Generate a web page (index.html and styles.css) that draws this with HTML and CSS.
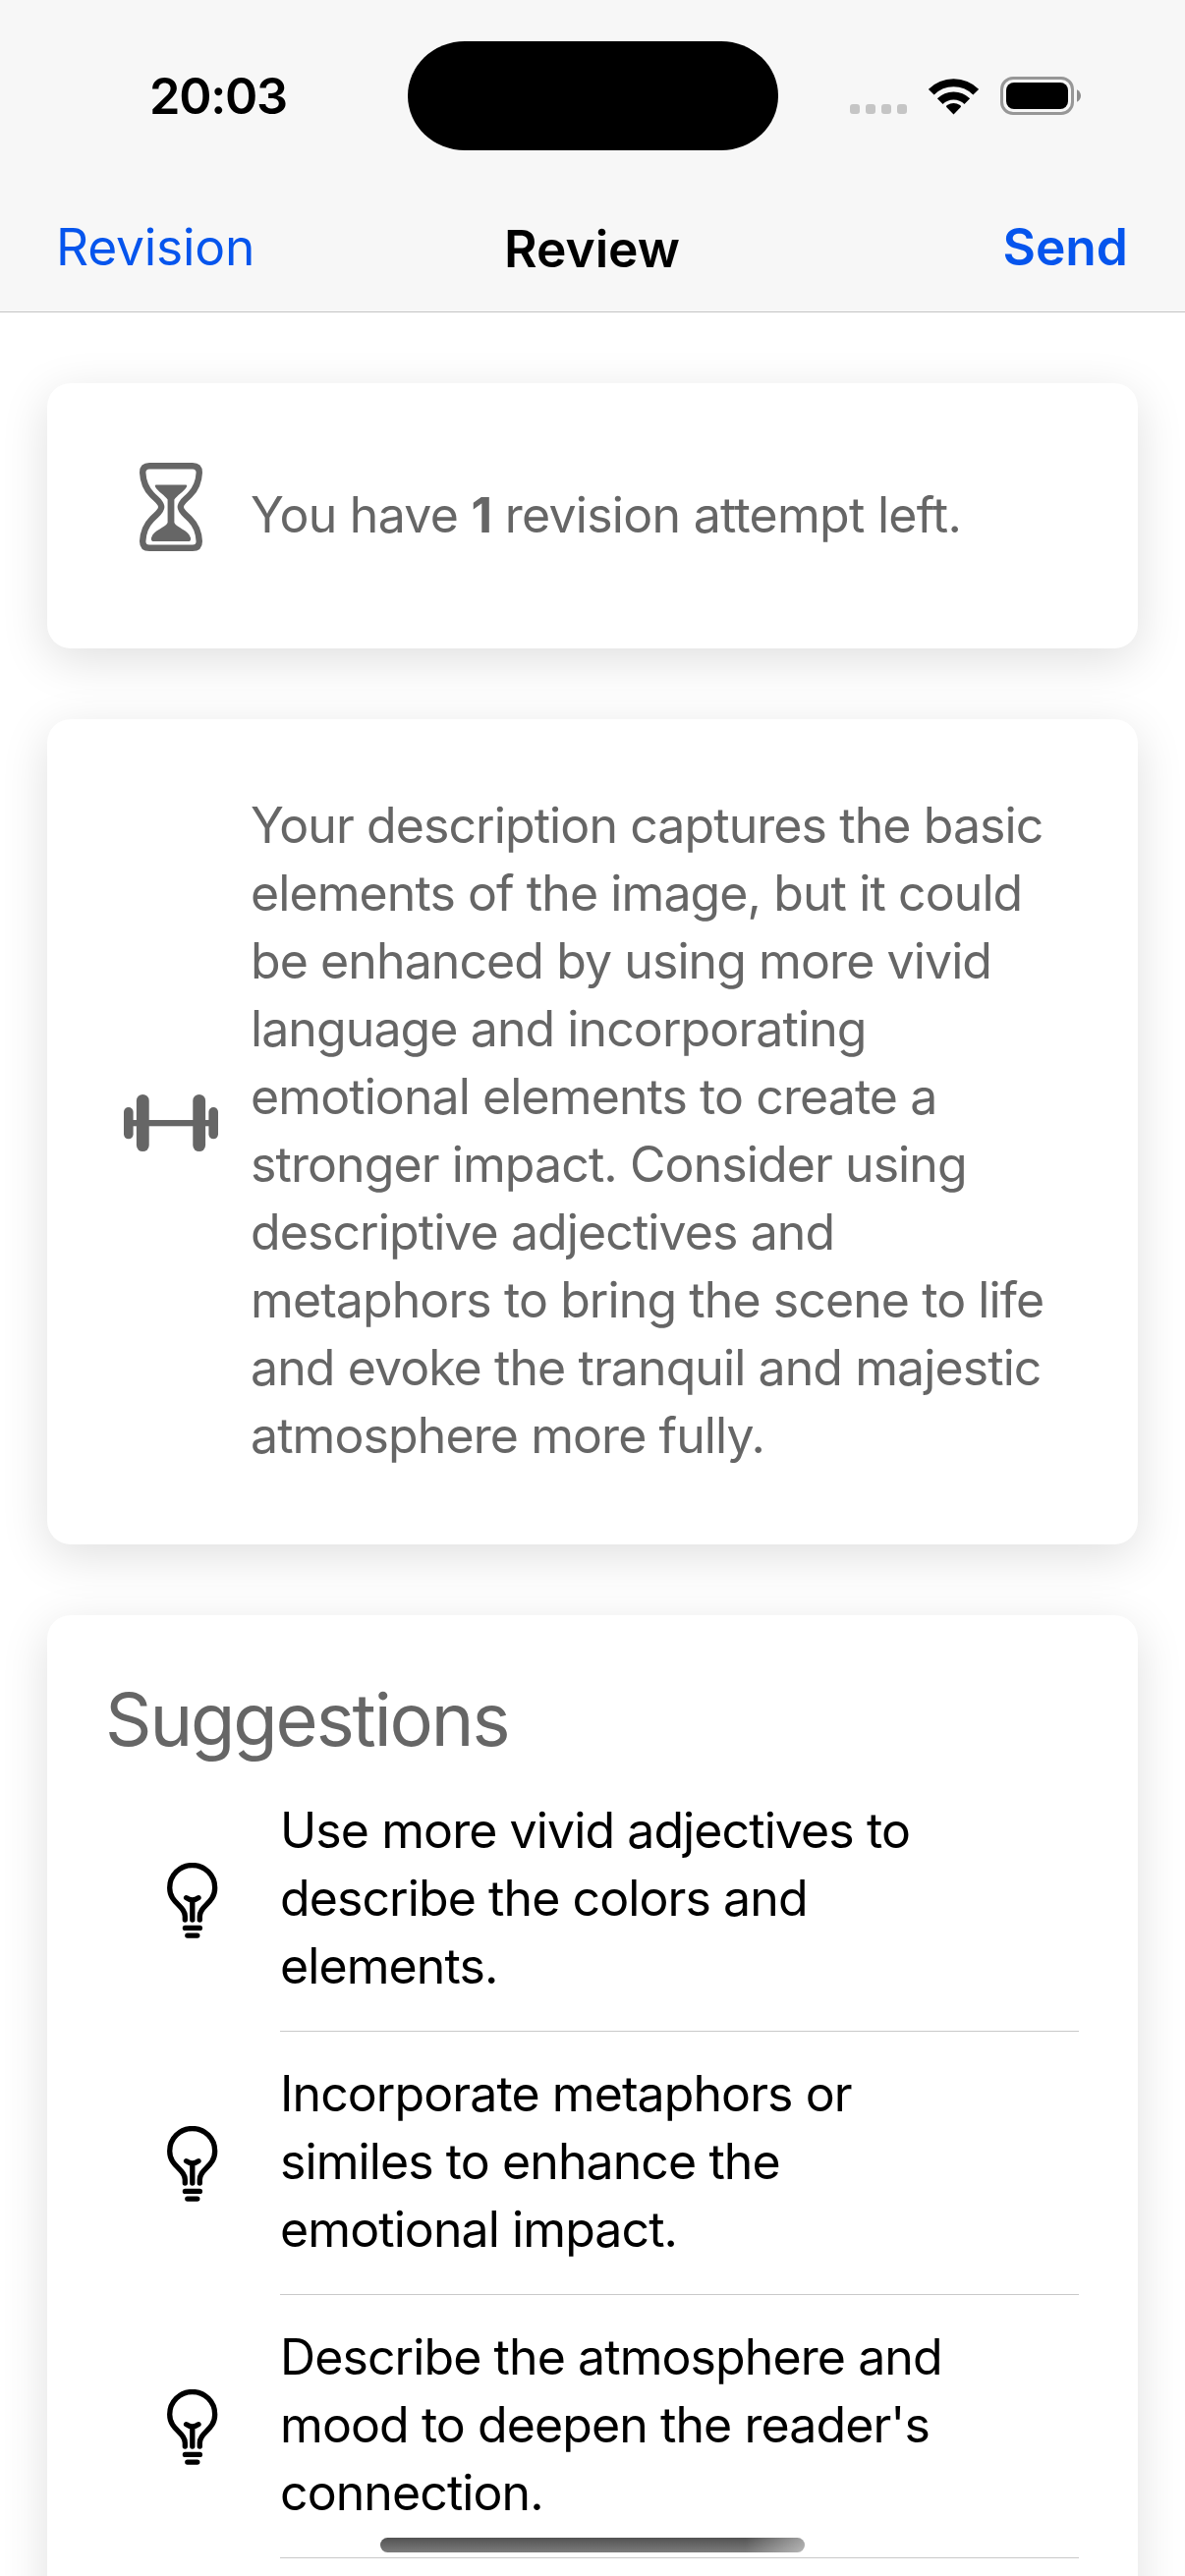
FILE: index.html
```html
<!DOCTYPE html>
<html lang="en">
<head>
<meta charset="utf-8">
<title>Review</title>
<link rel="stylesheet" href="styles.css">
</head>
<body>
<svg class="defs" aria-hidden="true">
  <symbol id="bulb" viewBox="0 0 52 77">
    <g fill="none" stroke="currentColor" stroke-width="5.3" stroke-linecap="round" stroke-linejoin="round">
      <path d="M18.3 58V54.5C18.3 43.5 2.7 41.5 2.7 25.5A23 23 0 0 1 48.7 25.5C48.7 41.5 33.3 43.5 33.3 54.5V58"/>
      <path d="M25.8 39V58M19.6 35.7Q25.8 40.3 32 35.7M18.4 66.4H33.4M20.8 74.1H30.8"/>
    </g>
  </symbol>
</svg>
<div class="screen">
  <header class="header">
    <div class="status">
      <div class="time">20:03</div>
      <div class="island"></div>
      <div class="indicators">
        <div class="dots"><i></i><i></i><i></i><i></i></div>
        <svg class="wifi" viewBox="0 0 51 38">
          <g fill="none" stroke="#000" stroke-width="8">
            <path d="M2.8 14.7A32 32 0 0 1 48.2 14.7"/>
            <path d="M11.7 24.1A19.5 19.5 0 0 1 39.3 24.1"/>
          </g>
          <path d="M25.5 37.5L18 29.8Q18 28.8 18.9 28.1A12 12 0 0 1 32.1 28.1Q33 28.8 33 29.8Z"/>
        </svg>
        <svg class="battery" viewBox="0 0 83 39">
          <rect x="1.5" y="1.5" width="72" height="36" rx="11.5" fill="none" stroke="#979797" stroke-width="3"/>
          <rect x="6" y="6" width="63" height="27" rx="8" fill="#000"/>
          <path d="M78 13.3V25.7C80.3 24.7 82 22.3 82 19.5S80.3 14.3 78 13.3Z" fill="#8c8c8c"/>
        </svg>
      </div>
    </div>
    <nav class="nav">
      <a class="back">Revision</a>
      <h1 class="title">Review</h1>
      <a class="send">Send</a>
    </nav>
  </header>
  <main class="content">
    <section class="card note">
      <div class="icon">
        <svg width="64" height="90" viewBox="0 0 64 90">
          <path fill="none" stroke="currentColor" stroke-width="6.4" d="M10 3.2H54Q60.8 3.2 60.8 10C60.3 20 57 27 51.5 32.5C46.5 37.8 41.8 40.3 41.8 45S46.5 52.2 51.5 57.5C57 63 60.3 70 60.8 80Q60.8 86.8 54 86.8H10Q3.2 86.8 3.2 80C3.7 70 7 63 12.5 57.5C17.5 52.2 22.2 49.7 22.2 45S17.5 37.8 12.5 32.5C7 27 3.7 20 3.2 10Q3.2 3.2 10 3.2Z"/>
          <path fill="currentColor" d="M17 22.5H47Q49 22.7 47.7 25C45.5 29 38 33.5 35.4 37.5V61C38 66.5 49.5 68 52 76.5Q52.5 80 49.5 80H14.5Q11.5 80 12 76.5C14.5 68 26 66.5 28.6 61V37.5C26 33.5 18.5 29 16.3 25Q15 22.7 17 22.5Z"/>
        </svg>
      </div>
      <p class="text attempts">You have <b>1</b> revision attempt left.</p>
    </section>
    <section class="card note">
      <div class="icon">
        <svg width="96" height="58" viewBox="0 0 96 58" fill="currentColor">
          <rect x="5" y="26" width="86" height="6.3"/>
          <rect x="0" y="13" width="9.6" height="32.3" rx="4.8"/>
          <rect x="12.9" y="0" width="12.8" height="58" rx="6.4"/>
          <rect x="70.3" y="0" width="12.8" height="58" rx="6.4"/>
          <rect x="86.4" y="13" width="9.6" height="32.3" rx="4.8"/>
        </svg>
      </div>
      <p class="text">Your description captures the basic<br>elements of the image, but it could<br>be enhanced by using more vivid<br>language and incorporating<br>emotional elements to create a<br>stronger impact. Consider using<br>descriptive adjectives and<br>metaphors to bring the scene to life<br>and evoke the tranquil and majestic<br>atmosphere more fully.</p>
    </section>
    <section class="card suggestions">
      <h2 class="heading">Suggestions</h2>
      <ul class="list">
        <li class="item"><svg class="bulb"><use href="#bulb"/></svg><p class="text">Use more vivid adjectives to<br>describe the colors and<br>elements.</p></li>
        <li class="item"><svg class="bulb"><use href="#bulb"/></svg><p class="text">Incorporate metaphors or<br>similes to enhance the<br>emotional impact.</p></li>
        <li class="item"><svg class="bulb"><use href="#bulb"/></svg><p class="text">Describe the atmosphere and<br>mood to deepen the reader's<br>connection.</p></li>
      </ul>
    </section>
  </main>
  <div class="home"></div>
</div>
</body>
</html>
```
FILE: styles.css
```css
* { box-sizing: border-box; margin: 0; padding: 0; }
body { background: #fff; font-family: Inter, "Liberation Sans", sans-serif; color: #000; }
.defs { position: absolute; width: 0; height: 0; }
.screen { position: relative; width: 1206px; height: 2622px; overflow: hidden; }
.header { height: 318px; background: #f7f7f7; border-bottom: 1px solid #c4c4c4; }
.status { display: grid; grid-template-columns: 415px 377px 1fr; height: 186px; padding-top: 41px; }
.time { padding: 27px 0 0 152px; font-size: 50.5px; line-height: 60px; font-weight: 600; letter-spacing: -1.3px; }
.island { height: 111px; margin-top: 0.5px; border-radius: 58px / 55.5px; background: #000; }
.indicators { display: flex; align-items: flex-start; padding: 37px 0 0 73px; }
.dots { display: flex; gap: 6px; padding-top: 28px; margin-right: 22px; }
.dots i { width: 10px; height: 10px; border-radius: 3px; background: #c5c5c5; }
.wifi { width: 51px; height: 38px; margin: 1px 22px 0 0; }
.battery { width: 83px; height: 39px; }
.nav { display: grid; grid-template-columns: 1fr 1fr 1fr; height: 131px; padding: 33px 58px 0 57px; font-size: 51.5px; line-height: 64px; }
.back { color: #0655ed; letter-spacing: -0.2px; }
.title { font-size: inherit; font-weight: 600; text-align: center; padding-top: 2px; letter-spacing: 0; }
.send { color: #0655ed; font-weight: 600; text-align: right; letter-spacing: 0; }
.content { display: flex; flex-direction: column; gap: 72px; padding: 72px 48px 0; }
.card { border-radius: 24px; background: #fff; box-shadow: 0 12px 48px rgba(0, 0, 0, 0.125); }
.note { display: grid; grid-template-columns: 96px 1fr; column-gap: 33px; align-items: center; padding: 74px 0 76px 78px; color: #666; }
.icon { display: flex; justify-content: center; padding-bottom: 16px; }
.text { font-size: 50px; line-height: 69px; letter-spacing: -0.91px; white-space: nowrap; }
.attempts { padding: 26px 0 25px; letter-spacing: -0.72px; }
.suggestions { height: 1100px; padding: 58px 60px 60px 59px; }
.heading { height: 98px; line-height: 96px; font-size: 74px; font-weight: 400; color: #666; letter-spacing: -2.1px; }
.list { list-style: none; }
.item { display: grid; grid-template-columns: 52px 1fr; column-gap: 63px; align-items: center; height: 268px; padding-left: 63px; }
.item .text { height: 268px; padding-top: 29px; border-bottom: 1px solid #c9c9c9; }
.bulb { width: 52px; height: 77px; }
.home { position: absolute; left: 387px; top: 2583px; width: 432px; height: 15px; border-radius: 8px; background: linear-gradient(90deg, rgba(255,255,255,0) 86%, rgba(255,255,255,0.45) 100%), linear-gradient(#525252, #7c7c7c); }
```
